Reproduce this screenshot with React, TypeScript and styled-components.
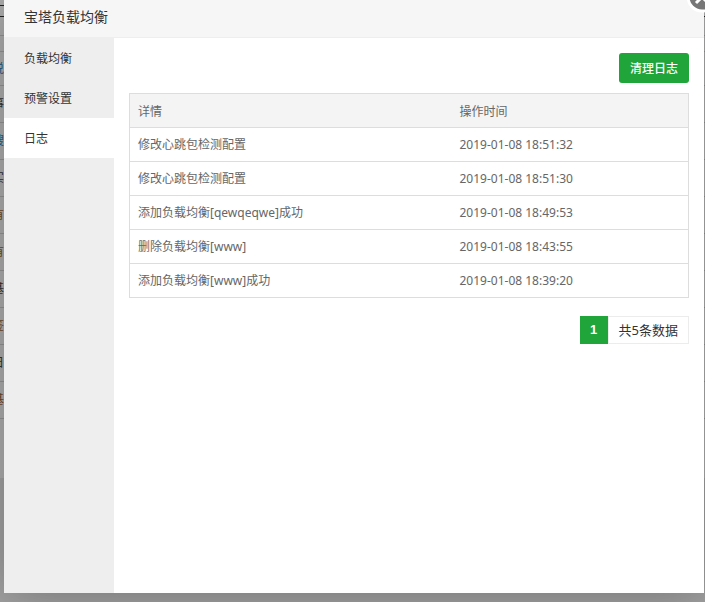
import React from "react";
import styled, { createGlobalStyle } from "styled-components";

const GlobalStyle = createGlobalStyle`
  * { box-sizing: border-box; }
  body {
    margin: 0;
    overflow: hidden;
    color: #333;
    background: #999;
    font: 12px/20px "Noto Sans", "Noto Sans CJK SC", sans-serif;
  }
  button { font: inherit; }
`;

const Stage = styled.div`
  position: relative;
  height: 100vh;
  overflow: hidden;
`;

const Backdrop = styled.div`
  position: absolute;
  inset: 0;
  background: #a2a2a2;
`;

const BackdropPanel = styled.div`
  padding-top: 5px;
  height: 478px;
  background: #aeaeae;
`;

const BackdropRow = styled.div<{ $height: number; $color?: string; $line?: string }>`
  display: flex;
  align-items: center;
  height: ${(p) => p.$height}px;
  color: ${(p) => p.$color ?? "#333"};
  border-bottom: 1px solid ${(p) => p.$line ?? "#949494"};
  text-indent: -8px;
  white-space: nowrap;
`;

const Dialog = styled.section`
  position: relative;
  display: flex;
  flex-direction: column;
  height: calc(100vh - 9px);
  margin: 0 1px 9px 4px;
  background: #fff;
  box-shadow: 1px 1px 50px rgba(0, 0, 0, 0.3);
`;

const Header = styled.header`
  flex: none;
  height: 38px;
  padding: 0 20px;
  background: #f6f6f6;
  border-bottom: 1px solid #eee;
`;

const Title = styled.h1`
  margin: 0;
  font-size: 14px;
  font-weight: 400;
  line-height: 34px;
`;

const CloseButton = styled.button`
  position: absolute;
  top: -19px;
  right: -14px;
  width: 32px;
  height: 32px;
  padding: 0;
  border: 0;
  background: none;
  svg { display: block; }
`;

const Body = styled.div`
  display: flex;
  flex: 1;
  min-height: 0;
`;

const Sidebar = styled.nav`
  flex: none;
  width: 110px;
  background: #eee;
`;

const Tab = styled.button<{ $active?: boolean }>`
  display: block;
  width: 100%;
  height: 40px;
  padding: 2px 20px 0;
  border: 0;
  text-align: left;
  color: #333;
  background: ${(p) => (p.$active ? "#fff" : "transparent")};
`;

const Content = styled.main`
  flex: 1;
  padding: 15px;
`;

const Toolbar = styled.div`
  display: flex;
  justify-content: flex-end;
  margin-bottom: 10px;
`;

const PrimaryButton = styled.button`
  height: 30px;
  padding: 2px 11px 0;
  border: 0;
  border-radius: 3px;
  color: #fff;
  background: #20a53a;
  font-weight: 500;
`;

const LogTable = styled.table`
  width: 100%;
  border: 1px solid #ddd;
  border-collapse: collapse;
  table-layout: fixed;
  color: #666;
`;

const Row = styled.tr`
  height: 34px;
  border-bottom: 1px solid #ddd;
`;

const HeadCell = styled.th`
  padding: 2px 8px 0;
  font-weight: 400;
  text-align: left;
  background: #f4f4f4;
  &:first-child { width: 322px; }
`;

const Cell = styled.td`
  padding: 0 8px;
`;

const Pager = styled.div`
  display: flex;
  justify-content: flex-end;
  margin-top: 18px;
  font-size: 13px;
  line-height: 26px;
`;

const CurrentPage = styled.span`
  width: 28px;
  height: 28px;
  border: 1px solid #20a53a;
  color: #fff;
  background: #20a53a;
  font-family: "Liberation Sans", sans-serif;
  font-weight: 700;
  text-align: center;
`;

const Total = styled.span`
  height: 28px;
  padding: 0 10px;
  border: 1px solid #ececec;
`;

const backdropRows = [
  { text: "", height: 1, line: "#222" },
  { text: "", height: 11, line: "#222" },
  { text: "", height: 19 },
  { text: "", height: 16 },
  { text: "说", height: 34, color: "#235b86" },
  { text: "事", height: 37 },
  { text: "搜", height: 37, color: "#235b86" },
  { text: "实", height: 37 },
  { text: "有", height: 37, color: "#704a25" },
  { text: "有", height: 37, color: "#704a25" },
  { text: "基", height: 37 },
  { text: "签", height: 37, color: "#704a25" },
  { text: "日", height: 37 },
  { text: "基", height: 37, color: "#704a25" },
];

const logs = [
  ["修改心跳包检测配置", "2019-01-08 18:51:32"],
  ["修改心跳包检测配置", "2019-01-08 18:51:30"],
  ["添加负载均衡[qewqeqwe]成功", "2019-01-08 18:49:53"],
  ["删除负载均衡[www]", "2019-01-08 18:43:55"],
  ["添加负载均衡[www]成功", "2019-01-08 18:39:20"],
];

export default function App() {
  return (
    <Stage>
      <GlobalStyle />
      <Backdrop aria-hidden="true">
        <BackdropPanel>
          {backdropRows.map((r, i) => (
            <BackdropRow key={i} $height={r.height} $color={r.color} $line={r.line}>{r.text}</BackdropRow>
          ))}
        </BackdropPanel>
      </Backdrop>
      <Dialog role="dialog" aria-labelledby="dialog-title">
        <Header><Title id="dialog-title">宝塔负载均衡</Title></Header>
        <CloseButton aria-label="关闭">
          <svg width="32" height="32" viewBox="0 0 32 32">
            <circle cx="16" cy="16" r="14" fill="#777" stroke="#fff" strokeWidth="3" />
            <path d="M10 10l12 12M22 10L10 22" stroke="#fff" strokeWidth="3" />
          </svg>
        </CloseButton>
        <Body>
          <Sidebar>
            <Tab>负载均衡</Tab>
            <Tab>预警设置</Tab>
            <Tab $active aria-current="page">日志</Tab>
          </Sidebar>
          <Content>
            <Toolbar><PrimaryButton>清理日志</PrimaryButton></Toolbar>
            <LogTable>
              <thead>
                <Row><HeadCell>详情</HeadCell><HeadCell>操作时间</HeadCell></Row>
              </thead>
              <tbody>
                {logs.map(([detail, time]) => (
                  <Row key={time}><Cell>{detail}</Cell><Cell>{time}</Cell></Row>
                ))}
              </tbody>
            </LogTable>
            <Pager>
              <CurrentPage aria-current="page">1</CurrentPage>
              <Total>共5条数据</Total>
            </Pager>
          </Content>
        </Body>
      </Dialog>
    </Stage>
  );
}
